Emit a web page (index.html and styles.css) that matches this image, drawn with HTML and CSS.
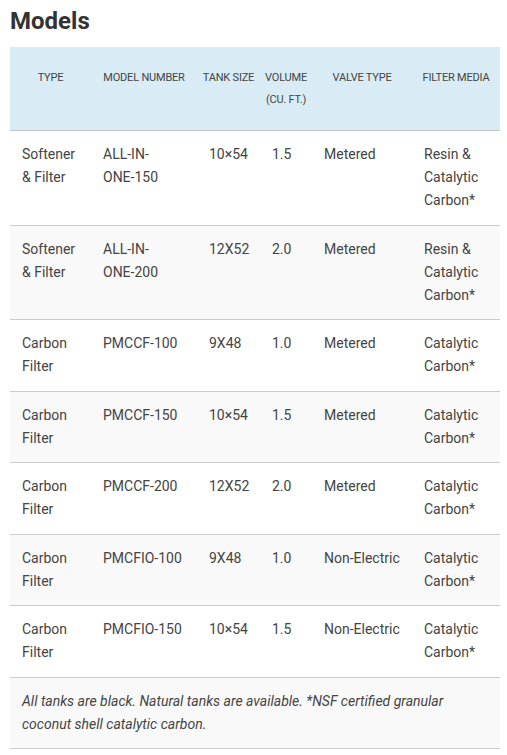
FILE: index.html
```html
<!DOCTYPE html>
<html>
<head>
<meta charset="utf-8">
<link rel="stylesheet" href="styles.css">
</head>
<body>
<div class="page">
  <h2 class="title">Models</h2>
  <table class="models">
    <colgroup>
      <col class="c-type">
      <col class="c-model">
      <col class="c-tank">
      <col class="c-vol">
      <col class="c-valve">
      <col class="c-media">
    </colgroup>
    <thead>
      <tr>
        <th>Type</th>
        <th>Model Number</th>
        <th>Tank Size</th>
        <th>Volume (Cu. Ft.)</th>
        <th>Valve Type</th>
        <th>Filter Media</th>
      </tr>
    </thead>
    <tbody>
      <tr>
        <td>Softener &amp; Filter</td>
        <td>ALL-IN-<span class="nb">ONE-150</span></td>
        <td>10×54</td>
        <td>1.5</td>
        <td>Metered</td>
        <td>Resin &amp; Catalytic Carbon*</td>
      </tr>
      <tr>
        <td>Softener &amp; Filter</td>
        <td>ALL-IN-<span class="nb">ONE-200</span></td>
        <td>12X52</td>
        <td>2.0</td>
        <td>Metered</td>
        <td>Resin &amp; Catalytic Carbon*</td>
      </tr>
      <tr>
        <td>Carbon Filter</td>
        <td><span class="nb">PMCCF-100</span></td>
        <td>9X48</td>
        <td>1.0</td>
        <td>Metered</td>
        <td>Catalytic Carbon*</td>
      </tr>
      <tr>
        <td>Carbon Filter</td>
        <td><span class="nb">PMCCF-150</span></td>
        <td>10×54</td>
        <td>1.5</td>
        <td>Metered</td>
        <td>Catalytic Carbon*</td>
      </tr>
      <tr>
        <td>Carbon Filter</td>
        <td><span class="nb">PMCCF-200</span></td>
        <td>12X52</td>
        <td>2.0</td>
        <td>Metered</td>
        <td>Catalytic Carbon*</td>
      </tr>
      <tr>
        <td>Carbon Filter</td>
        <td><span class="nb">PMCFIO-100</span></td>
        <td>9X48</td>
        <td>1.0</td>
        <td>Non-Electric</td>
        <td>Catalytic Carbon*</td>
      </tr>
      <tr>
        <td>Carbon Filter</td>
        <td><span class="nb">PMCFIO-150</span></td>
        <td>10×54</td>
        <td>1.5</td>
        <td>Non-Electric</td>
        <td>Catalytic Carbon*</td>
      </tr>
      <tr class="note">
        <td colspan="6">All tanks are black. Natural tanks are available. *NSF certified granular coconut shell catalytic carbon.</td>
      </tr>
    </tbody>
  </table>
</div>
</body>
</html>
```

FILE: styles.css
```css
html, body {
  margin: 0;
  padding: 0;
  background: #fff;
}

.page {
  padding: 0 7px 0 10px;
  font-family: Roboto, "Liberation Sans", sans-serif;
  color: #444;
}

.title {
  margin: 7px 0 11px;
  font-size: 24px;
  line-height: 29px;
  font-weight: 700;
  color: #333;
}

.models {
  width: 490px;
  border-collapse: collapse;
  table-layout: fixed;
}

.c-type { width: 81px; }
.c-model { width: 106px; }
.c-tank { width: 63px; }
.c-vol { width: 52px; }
.c-valve { width: 100px; }
.c-media { width: 88px; }

.models th {
  background: #d9ecf6;
  font-size: 11px;
  font-weight: 400;
  text-transform: uppercase;
  line-height: 22px;
  color: #444;
  text-align: center;
  vertical-align: top;
  padding: 20px 2px 19px;
  border-bottom: 1px solid #c4c4c4;
  letter-spacing: -0.2px;
}

.models td {
  font-size: 14px;
  line-height: 23px;
  padding: 12px 12px 12.5px;
  vertical-align: top;
  text-align: left;
  border-bottom: 1px solid #ccc;
  color: #444;
}

.nb {
  white-space: nowrap;
}

.models tbody tr:nth-child(even) td {
  background: #f9f9f9;
}

.models .note td {
  font-style: italic;
  padding: 12px 12px 12.5px;
}
```
